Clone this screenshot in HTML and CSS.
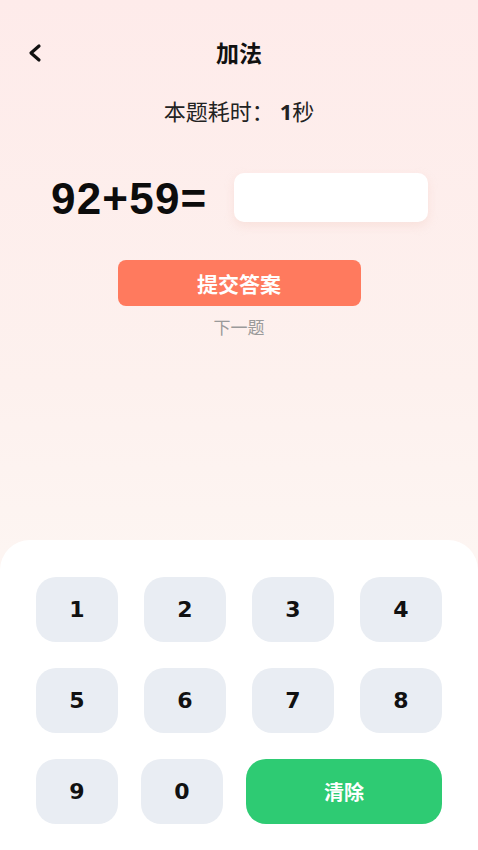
FILE: index.html
```html
<!DOCTYPE html>
<html lang="zh">
<head>
<meta charset="utf-8">
<link rel="stylesheet" href="styles.css">
</head>
<body>
<div class="page">
  <header class="header">
    <span class="back">
      <svg width="16" height="20" viewBox="0 0 16 20"><path d="M12 3 L4 10 L12 17" fill="none" stroke="#111" stroke-width="3.2" stroke-linecap="round" stroke-linejoin="round"/></svg>
    </span>
    <h1 class="title">加法</h1>
  </header>
  <div class="timer">本题耗时：<b>1</b>秒</div>
  <div class="question">
    <span class="expr">92+59=</span>
    <div class="answer"></div>
  </div>
  <div class="submit">提交答案</div>
  <div class="next">下一题</div>
  <div class="spacer"></div>
  <div class="pad">
    <div class="row">
      <div class="key">1</div><div class="key">2</div><div class="key">3</div><div class="key">4</div>
    </div>
    <div class="row">
      <div class="key">5</div><div class="key">6</div><div class="key">7</div><div class="key">8</div>
    </div>
    <div class="row">
      <div class="key">9</div><div class="key">0</div><div class="key clear">清除</div>
    </div>
  </div>
</div>
</body>
</html>
```
FILE: styles.css
```css
html, body { margin: 0; padding: 0; }
body {
  width: 478px;
  height: 850px;
  overflow: hidden;
  font-family: "Noto Sans CJK SC", "Noto Sans", sans-serif;
  color: #111;
}
.page {
  height: 850px;
  display: flex;
  flex-direction: column;
  background: linear-gradient(180deg, #feebea 0%, #fdf1ee 45%, #fdf5f2 65%);
}
.header {
  position: relative;
  height: 34px;
  margin-top: 35px;
  display: flex;
  align-items: center;
  justify-content: center;
}
.back {
  position: absolute;
  left: 27px;
  top: 8px;
  display: flex;
}
.title {
  margin: 0;
  font-size: 23px;
  font-weight: 700;
  line-height: 34px;
}
.timer {
  margin-top: 26px;
  text-align: center;
  font-size: 22px;
  line-height: 30px;
  color: #222;
}
.timer b { font-family: "Noto Sans", sans-serif; font-weight: 700; margin-left: 6px; }
.question {
  margin-top: 47px;
  display: flex;
  align-items: center;
  padding-left: 51px;
  height: 49px;
}
.expr {
  font-family: "Liberation Sans", Arial, sans-serif;
  font-weight: 700;
  font-size: 44px;
  letter-spacing: 1.2px;
  color: #0c0c0c;
  width: 183px;
  line-height: 49px;
  padding-top: 2px;
}
.answer {
  width: 194px;
  height: 49px;
  background: #fff;
  border-radius: 10px;
  box-shadow: 0 4px 10px rgba(240, 200, 190, 0.35);
}
.submit {
  margin: 38px auto 0;
  width: 243px;
  height: 46px;
  border-radius: 8px;
  background: #ff7a5e;
  color: #fff;
  font-weight: 700;
  font-size: 21px;
  display: flex;
  align-items: center;
  justify-content: center;
}
.next {
  margin-top: 9px;
  text-align: center;
  font-size: 17px;
  color: #9a9a9a;
  line-height: 24px;
}
.spacer { flex: 1; }
.pad {
  height: 310px;
  box-sizing: border-box;
  background: #fff;
  border-radius: 30px 30px 0 0;
  padding: 37px 36px 0;
  display: flex;
  flex-direction: column;
  gap: 26px;
}
.row {
  display: flex;
  justify-content: space-between;
}
.key {
  width: 82px;
  height: 65px;
  border-radius: 20px;
  background: #e9edf3;
  display: flex;
  align-items: center;
  justify-content: center;
  font-family: "DejaVu Sans", sans-serif;
  font-weight: 700;
  font-size: 22px;
  color: #111;
}
.key.clear {
  width: 196px;
  background: #2ecb73;
  color: #fff;
  font-family: "Noto Sans CJK SC", sans-serif;
  font-weight: 700;
  font-size: 20px;
}
```
